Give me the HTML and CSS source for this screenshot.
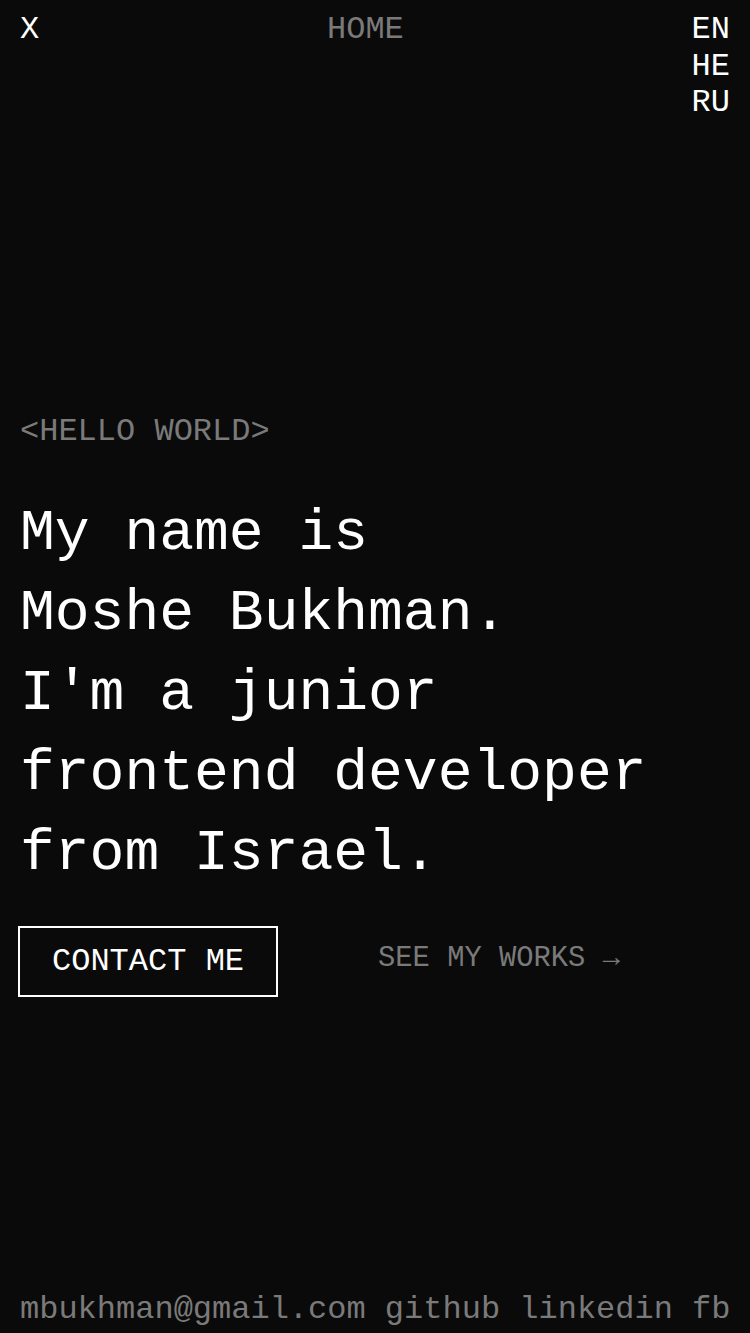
FILE: index.html
```html
<!DOCTYPE html>
<html lang="en">
<head>
<meta charset="utf-8">
<title>Moshe Bukhman</title>
<link rel="stylesheet" href="styles.css">
</head>
<body>
<div class="page">
  <header class="top">
    <a class="close" href="#">X</a>
    <a class="home" href="#">HOME</a>
    <ul class="langs">
      <li><a href="#">EN</a></li>
      <li><a href="#">HE</a></li>
      <li><a href="#">RU</a></li>
    </ul>
  </header>
  <main class="hero">
    <p class="tag">&lt;HELLO WORLD&gt;</p>
    <h1 class="title">My name is<br>Moshe Bukhman.<br>I'm a junior<br>frontend developer<br>from Israel.</h1>
    <div class="actions">
      <a class="btn" href="#">CONTACT ME</a>
      <a class="works" href="#">SEE MY WORKS →</a>
    </div>
  </main>
  <footer class="foot">
    <a href="#">mbukhman@gmail.com</a> <a href="#">github</a> <a href="#">linkedin</a> <a href="#">fb</a>
  </footer>
</div>
</body>
</html>
```
FILE: styles.css
```css
html, body {
  margin: 0;
  padding: 0;
  background: #0a0a0a;
}
body {
  color: #ffffff;
  font-family: "Liberation Mono", "DejaVu Sans Mono", monospace;
}
a {
  color: inherit;
  text-decoration: none;
}
.page {
  height: 1333px;
  box-sizing: border-box;
  padding: 12px 20px 5px;
  display: flex;
  flex-direction: column;
}
.top {
  display: flex;
  justify-content: space-between;
  align-items: flex-start;
  font-size: 32px;
  line-height: 36.7px;
}
.home {
  color: #7a7a7a;
}
.langs {
  list-style: none;
  margin: 0;
  padding: 0;
}
.hero {
  flex: 1;
  display: flex;
  flex-direction: column;
  justify-content: center;
  align-items: flex-start;
  padding-bottom: 3px;
}
.tag {
  margin: 0;
  font-size: 32px;
  line-height: 37.5px;
  color: #7a7a7a;
}
.title {
  margin: 43px 0 32px;
  font-size: 58px;
  line-height: 80px;
  font-weight: 400;
}
.actions {
  display: flex;
  align-items: center;
  gap: 100px;
  margin-left: -2px;
}
.btn {
  border: 2px solid #ffffff;
  padding: 15px 32px;
  font-size: 32px;
  line-height: 37px;
}
.works {
  font-size: 28.8px;
  line-height: 34px;
  color: #7a7a7a;
  margin-top: -4px;
}
.foot {
  font-size: 32px;
  line-height: 37.5px;
  color: #7a7a7a;
  white-space: nowrap;
}
```
